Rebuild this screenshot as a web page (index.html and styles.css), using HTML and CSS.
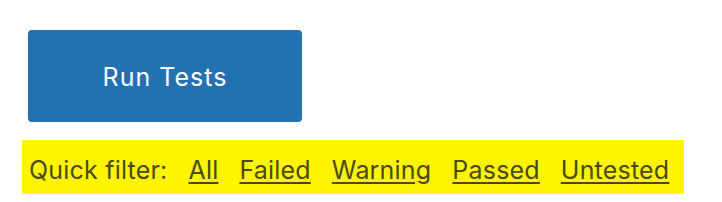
FILE: index.html
```html
<!DOCTYPE html>
<html lang="en">
<head>
  <meta charset="UTF-8">
  <title>Run Tests</title>
  <link rel="stylesheet" href="styles.css">
</head>
<body>
  <button class="run-btn">Run Tests</button>
  <div class="quick-filter">
    <span class="label">Quick filter:</span>
    <a href="#">All</a>
    <a href="#">Failed</a>
    <a href="#">Warning</a>
    <a href="#">Passed</a>
    <a href="#">Untested</a>
  </div>
</body>
</html>
```

FILE: styles.css
```css
body {
  font-family: Inter, "Noto Sans", sans-serif;
  margin: 0;
  padding: 30px 0 0 22px;
  background: #fff;
}
.run-btn {
  display: block;
  margin-left: 6px;
  width: 274px;
  height: 92px;
  padding-top: 2px;
  background-color: #2271b1;
  color: white;
  border: none;
  border-radius: 4px;
  font-family: inherit;
  font-size: 25px;
  letter-spacing: 1px;
  cursor: pointer;
}
.quick-filter {
  display: flex;
  align-items: center;
  gap: 21px;
  width: 662px;
  height: 54px;
  box-sizing: border-box;
  margin-top: 18px;
  padding: 5px 0 0 7px;
  background-color: #fff500;
  color: #4a4a10;
  font-size: 25px;
  letter-spacing: 0.2px;
}
.quick-filter a {
  color: #4a4a10;
  text-decoration: underline;
  text-underline-offset: 3px;
}
```
